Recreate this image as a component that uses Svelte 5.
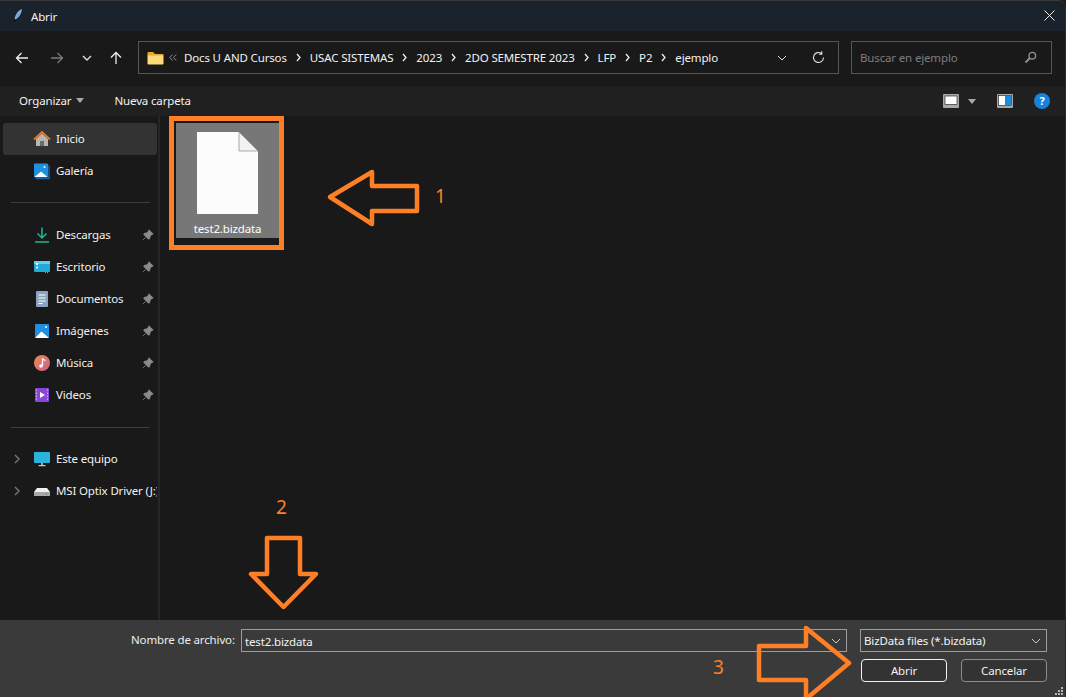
<script>
  const crumbs = ['Docs U AND Cursos', 'USAC SISTEMAS', '2023', '2DO SEMESTRE 2023', 'LFP', 'P2', 'ejemplo'];
  const pinned = [
    { id: 'down', label: 'Descargas' },
    { id: 'desk', label: 'Escritorio' },
    { id: 'docs', label: 'Documentos' },
    { id: 'pics', label: 'Imágenes' },
    { id: 'music', label: 'Música' },
    { id: 'video', label: 'Videos' }
  ];
</script>

{#snippet chev(cls)}
  <svg class={cls} width="10" height="10" viewBox="0 0 10 10"><path d="M1 3 5 7 9 3" fill="none" stroke="currentColor" stroke-width="1"/></svg>
{/snippet}

{#snippet navicon(id)}
  <svg class="nicon" width="18" height="18" viewBox="0 0 18 18">
    {#if id === 'home'}
      <path d="M3 9v7h12V9L9 3.500Z" fill="#b9b4ae"/>
      <rect x="7" y="11" width="4" height="5" fill="#6e6a66"/>
      <path d="M1 9.500 9 2l8 7.500" fill="none" stroke="#e8772e" stroke-width="1.800"/>
    {:else if id === 'gallery'}
      <rect x="1" y="1.500" width="14" height="14" rx="1" fill="#1f8fe0"/>
      <path d="M16 3.500v13H3" fill="none" stroke="#1565b0" stroke-width="1.400"/>
      <path d="M1.500 15 8 9.500l6.500 5.500Z" fill="#fff"/>
      <circle cx="11.500" cy="5" r="1" fill="#fff"/>
    {:else if id === 'down'}
      <path d="M9 1.500v10M4.500 7.500 9 12l4.500-4.500" fill="none" stroke="#27b391" stroke-width="1.500"/>
      <path d="M2 16h14" stroke="#27b391" stroke-width="1.600"/>
    {:else if id === 'desk'}
      <rect x="1" y="3" width="16" height="11" rx="1" fill="#22a9d8"/>
      <rect x="1" y="3" width="16" height="3" fill="#5fd0ee"/>
      <rect x="3" y="5" width="2" height="2" fill="#fff"/>
      <rect x="3" y="8.500" width="2" height="2" fill="#d8f5ff"/>
      <path d="M12 14.700h1M14 14.700h1" stroke="#9ad" stroke-width="1"/>
    {:else if id === 'docs'}
      <rect x="3" y="1" width="12" height="16" rx="1" fill="#8ba3c0"/>
      <path d="M5.500 5h7M5.500 8h7M5.500 11h7M5.500 13.500h4" stroke="#fff" stroke-width="1"/>
    {:else if id === 'pics'}
      <rect x="2" y="2" width="14" height="14" rx="1" fill="#1f8fe0"/>
      <path d="M2 16 8.500 9.500 16 16Z" fill="#fff"/>
      <circle cx="13" cy="5" r="1" fill="#fff"/>
    {:else if id === 'music'}
      <defs><linearGradient id="mg" x1="0" x2="1" y1="0" y2="1"><stop offset="0" stop-color="#ef8a4c"/><stop offset="1" stop-color="#c9608c"/></linearGradient></defs>
      <circle cx="9" cy="9" r="8" fill="url(#mg)"/>
      <path d="M9.500 4.500v7" stroke="#fff" stroke-width="1.300"/>
      <path d="M9.500 4.500q1 1.500 3 2" fill="none" stroke="#fff" stroke-width="1.200"/>
      <circle cx="8" cy="12" r="1.800" fill="#fff"/>
    {:else if id === 'video'}
      <rect x="2" y="2" width="14" height="14" rx="1" fill="#8b46d8"/>
      <path d="M7 6v6l5-3Z" fill="#fff"/>
      <path d="M3.500 3.500v11M14.500 3.500v11" stroke="#c9a6f0" stroke-width="1.200" stroke-dasharray="1.500 1.500"/>
    {:else if id === 'pc'}
      <rect x="1" y="2" width="16" height="11" rx="1" fill="#2cb3dc"/>
      <rect x="8" y="13" width="2" height="2" fill="#9aa5ad"/>
      <rect x="5.500" y="15" width="7" height="1.200" fill="#c4ccd2"/>
    {:else}
      <path d="M4 6h10l3 4H1Z" fill="#f0f0f0"/>
      <rect x="1" y="10" width="16" height="4" fill="#a9a9a9"/>
      <rect x="12" y="11.500" width="3" height="1" fill="#4b4"/>
    {/if}
  </svg>
{/snippet}

{#snippet pin()}
  <svg class="pin" width="12" height="12" viewBox="0 0 12 12"><path d="M7 .8 11.200 5 9.700 5.700 8 7.400 7.800 9.500 6.600 10.300 1.700 5.400 2.500 4.200 4.600 4 6.300 2.300ZM3.600 8.400 1 11" fill="#8b8b8b" stroke="#8b8b8b" stroke-width=".8"/></svg>
{/snippet}

<div class="win">
  <header class="title">
    <svg class="feather" width="10" height="14" viewBox="0 0 10 14"><path d="M8.500.5C5 2 2.500 6 2 10l1.500-.5C6 8 8 4.500 8.500.5Z" fill="#6aa6e8" stroke="#cfe3fa" stroke-width=".5"/><path d="M2 10 1 13.500" stroke="#111" stroke-width="1"/></svg>
    <span class="ttl">Abrir</span>
    <svg class="close" width="11" height="11" viewBox="0 0 11 11"><path d="M.5.500l10 10M10.500.500l-10 10" stroke="#eee" stroke-width="1"/></svg>
  </header>

  <div class="tools">
    <div class="navs">
      <svg width="14" height="14" viewBox="0 0 14 14"><path d="M13 7H1.500M6.500 2 1.500 7l5 5" fill="none" stroke="#eee" stroke-width="1.300"/></svg>
      <svg class="dim" width="14" height="14" viewBox="0 0 14 14"><path d="M1 7h11.500M7.500 2l5 5-5 5" fill="none" stroke="#7c7c7c" stroke-width="1.300"/></svg>
      <svg class="mini" width="10" height="10" viewBox="0 0 10 10"><path d="M1 3l4 4 4-4" fill="none" stroke="#ddd" stroke-width="1.400"/></svg>
      <svg class="upb" width="14" height="14" viewBox="0 0 14 14"><path d="M7 13V1.500M2 6.500l5-5 5 5" fill="none" stroke="#eee" stroke-width="1.300"/></svg>
    </div>
    <div class="addr">
      <svg class="folder" width="17" height="14" viewBox="0 0 17 14"><path d="M.5 2a1 1 0 0 1 1-1h4.500l2 2h7.500a1 1 0 0 1 1 1v1H.5Z" fill="#e8a92c"/><path d="M.5 4.500h16v8a1 1 0 0 1-1 1h-14a1 1 0 0 1-1-1Z" fill="#fbdc78"/></svg>
      <svg class="dbl" width="8" height="7" viewBox="0 0 8 7"><path d="M3.500.5.800 3.500l2.700 3M7.200.5 4.500 3.500l2.700 3" fill="none" stroke="#8a8a8a" stroke-width="1"/></svg>
      <div class="crumbs">
        {#each crumbs as c, i}
          <span class="crumb">{c}</span>
          {#if i < crumbs.length - 1}
            <svg class="sep" width="5" height="9" viewBox="0 0 5 9"><path d="M1 1l3 3.500L1 8" fill="none" stroke="#eee" stroke-width="1.300"/></svg>
          {/if}
        {/each}
      </div>
      {@render chev('addrchev')}
      <svg class="refresh" width="13" height="13" viewBox="0 0 13 13"><path d="M11.500 6.500A5 5 0 1 1 9.500 2.500M9.800.3v2.900H6.900" fill="none" stroke="#ddd" stroke-width="1.100"/></svg>
    </div>
    <div class="search">
      <span>Buscar en ejemplo</span>
      <svg width="13" height="13" viewBox="0 0 13 13"><circle cx="8.300" cy="4.700" r="3.300" fill="none" stroke="#8e8e8e" stroke-width="1.400"/><path d="M6 7 1.500 11.500" stroke="#8e8e8e" stroke-width="2"/></svg>
    </div>
  </div>

  <div class="cmd">
    <span class="c1">Organizar</span>
    <i class="tri c1t"></i>
    <span class="c2">Nueva carpeta</span>
    <div class="rt">
      <svg width="16" height="14" viewBox="0 0 16 14"><rect width="16" height="14" rx="1" fill="#a8a8a8"/><rect x="2" y="2" width="12" height="8.500" fill="#fff" stroke="#111" stroke-width=".6"/></svg>
      <i class="tri vt"></i>
      <svg class="pane" width="16" height="14" viewBox="0 0 16 14"><rect width="16" height="14" rx="1" fill="#a8a8a8"/><rect x="1.500" y="1.500" width="13" height="10" fill="#fff" stroke="#111" stroke-width=".6"/><rect x="8" y="2" width="6" height="9" fill="#1c8ce0"/></svg>
      <span class="help">?</span>
    </div>
  </div>

  <div class="main">
    <nav class="side">
      <div class="row sel">{@render navicon('home')}<span>Inicio</span></div>
      <div class="row">{@render navicon('gallery')}<span>Galería</span></div>
      <hr />
      {#each pinned as p}
        <div class="row">{@render navicon(p.id)}<span>{p.label}</span>{@render pin()}</div>
      {/each}
      <hr class="second" />
      <div class="row">
        <svg class="exp" width="7" height="10" viewBox="0 0 7 10"><path d="M1 1l4 4-4 4" fill="none" stroke="#777" stroke-width="1.400"/></svg>
        {@render navicon('pc')}<span>Este equipo</span>
      </div>
      <div class="row">
        <svg class="exp" width="7" height="10" viewBox="0 0 7 10"><path d="M1 1l4 4-4 4" fill="none" stroke="#777" stroke-width="1.400"/></svg>
        {@render navicon('drive')}<span class="clip">MSI Optix Driver (J:)</span>
      </div>
    </nav>
    <section class="files">
      <div class="tile">
        <svg width="61" height="82" viewBox="0 0 61 82"><path d="M0 0H42L61 19V82H0Z" fill="#fcfcfc"/><path d="M42 0V19H61Z" fill="#f2f2f2" stroke="#8a8a8a" stroke-width=".7"/></svg>
        <span>test2.bizdata</span>
      </div>
    </section>
  </div>

  <footer class="foot">
    <div class="line">
      <label for="fname">Nombre de archivo:</label>
      <div class="fld name"><span id="fname">test2.bizdata</span>{@render chev('fchev')}</div>
      <div class="fld type"><span>BizData files (*.bizdata)</span>{@render chev('fchev')}</div>
    </div>
    <div class="btns">
      <button class="primary">Abrir</button>
      <button>Cancelar</button>
    </div>
    <svg class="grip" width="9" height="9" viewBox="0 0 9 9" fill="#b5b5b5"><rect x="6" y="0" width="2" height="2"/><rect x="3" y="3" width="2" height="2"/><rect x="6" y="3" width="2" height="2"/><rect x="0" y="6" width="2" height="2"/><rect x="3" y="6" width="2" height="2"/><rect x="6" y="6" width="2" height="2"/></svg>
  </footer>

  <svg class="marks" width="1066" height="697" viewBox="0 0 1066 697">
    <g fill="none" stroke="#ff7f27" stroke-linejoin="round">
      <rect x="171.500" y="118.500" width="110" height="129" stroke-width="5" stroke-linejoin="miter"/>
      <path d="M330 197 372 172V186H417V211H372V224Z" stroke-width="4.500"/>
      <path d="M267 538H300V574H316L283.500 607 251 574H267Z" stroke-width="4.500"/>
      <path d="M759 646H806V628L849 663 806 699V680H759Z" stroke-width="4.500"/>
    </g>
  </svg>
  <span class="num n1">1</span>
  <span class="num n2">2</span>
  <span class="num n3">3</span>
</div>

<style>
  :global(body) { margin: 0; background: #1c1c1c; }
  .win {
    position: relative; width: 1066px; height: 697px; overflow: hidden; box-sizing: border-box;
    display: flex; flex-direction: column; border-top: 1px solid #3a3a3a; border-right: 1px solid #2b2b2b;
    border-radius: 0 8px 0 0; background: #191919; color: #fff;
    font-family: "Noto Sans", sans-serif; font-size: 11.5px; letter-spacing: -0.15px;
  }
  .title { height: 30px; flex: none; background: #1a222b; display: flex; align-items: center; padding: 0 10px 0 13px; }
  .feather { margin-right: 8px; }
  .ttl { color: #f2f2f2; }
  .close { margin: -2px 0 0 auto; }

  .tools { height: 55px; flex: none; box-sizing: border-box; padding: 10px 13px 0 0; display: flex; background: #191919; }
  .navs { width: 138px; height: 33px; display: flex; align-items: center; flex: none; padding-left: 15px; box-sizing: border-box; }
  .dim { margin-left: 21px; }
  .mini { margin-left: 18px; }
  .upb { margin-left: 17px; }
  .addr { width: 701px; height: 33px; box-sizing: border-box; border: 1px solid #565656; display: flex; align-items: center; padding-left: 8px; flex: none; }
  .folder { margin-right: 5px; flex: none; }
  .dbl { margin-right: 7px; flex: none; }
  .crumbs { display: flex; align-items: center; gap: 9px; }
  .crumb { color: #f2f2f2; white-space: nowrap; }
  .addrchev { margin-left: auto; color: #ddd; }
  .refresh { margin: 0 13px 0 25px; }
  .search { width: 201px; height: 33px; margin-left: 12px; box-sizing: border-box; border: 1px solid #565656; display: flex; align-items: center; justify-content: space-between; padding: 0 14px 0 8px; color: #7d7d7d; }

  .cmd { height: 30px; flex: none; background: #202020; display: flex; align-items: center; padding: 0 15px 1px 19px; box-sizing: border-box; }
  .tri { display: block; width: 0; height: 0; border: 4px solid transparent; border-top: 5px solid #a8a8a8; border-bottom: 0; }
  .c1t { margin-left: 5px; }
  .c2 { margin-left: 30px; }
  .c1, .c2 { color: #f2f2f2; }
  .rt { margin-left: auto; display: flex; align-items: center; margin-top: 1px; }
  .vt { margin-left: 9px; }
  .pane { margin-left: 21px; }
  .help { margin-left: 21px; width: 16px; height: 16px; border-radius: 50%; background: #1583dc; color: #fff; font-weight: 700; font-size: 11px; line-height: 16px; text-align: center; }

  .main { flex: 1; min-height: 0; display: flex; }
  .side { width: 160px; flex: none; box-sizing: border-box; padding: 7px 0 0 3px; border-right: 2px solid #262626; }
  .row { position: relative; width: 154px; height: 32px; display: flex; align-items: center; padding-left: 30px; box-sizing: border-box; color: #f2f2f2; gap: 5px; }
  .row span { padding-bottom: 2px; }
  .row.sel { background: #333; border-radius: 3px; }
  .nicon { flex: none; }
  .pin { position: absolute; right: 3px; top: 10px; }
  .exp { position: absolute; left: 11px; top: 11px; }
  .clip { width: 101px; flex: none; overflow: hidden; white-space: nowrap; }
  hr { border: 0; height: 1px; background: #3c3c3c; width: 139px; margin: 15px 0 16px 8px; }
  hr.second { margin-top: 16px; margin-bottom: 15px; }

  .files { flex: 1; padding: 7px 0 0 16px; }
  .tile { width: 103px; height: 115px; background: #777; box-sizing: border-box; padding-top: 9px; display: flex; flex-direction: column; align-items: center; color: #fff; }
  .tile span { margin-top: 7px; }

  .foot { position: relative; height: 77px; flex: none; background: #3a3a3a; box-sizing: border-box; padding: 9px 18px 0 131px; }
  .line { display: flex; align-items: center; height: 23px; }
  label { width: 110px; flex: none; color: #efefef; white-space: nowrap; padding-bottom: 2px; }
  .fld { height: 23px; box-sizing: border-box; border: 1px solid #9d9d9d; display: flex; align-items: center; justify-content: space-between; padding: 0 3px; color: #f4f4f4; }
  .name { width: 606px; }
  .name span { padding-top: 2px; }
  .type { width: 187px; margin-left: 13px; }
  .type span { padding-bottom: 1px; }
  .fchev { color: #ccc; margin-right: 2px; }
  .btns { display: flex; justify-content: flex-end; gap: 14px; margin-top: 7px; }
  button { width: 86px; height: 23px; box-sizing: border-box; padding: 0; border: 1px solid #8d8d8d; border-radius: 4px; background: #333; color: #f2f2f2; font: inherit; letter-spacing: inherit; }
  button.primary { border-color: #f2f2f2; }
  .grip { position: absolute; right: 1px; bottom: 1px; }

  .marks { position: absolute; left: 0; top: -1px; pointer-events: none; }
  .num { position: absolute; color: #ff7f27; font-size: 19px; line-height: 22px; letter-spacing: 0; }
  .n1 { left: 435px; top: 184px; }
  .n2 { left: 276px; top: 495px; }
  .n3 { left: 713px; top: 655px; }
</style>
